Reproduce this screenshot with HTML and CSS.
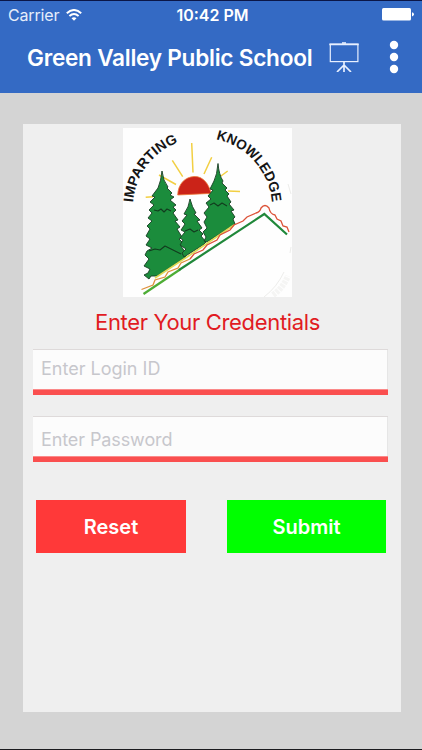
FILE: index.html
```html
<!DOCTYPE html>
<html lang="en">
<head>
	<meta charset="utf-8">
	<title>Green Valley Public School</title>
	<meta name="viewport" content="width=device-width, initial-scale=1.0">
	<link rel="stylesheet" href="styles.css">
</head>
<body>
	<header class="header">
		<div class="status">
			<div class="carrier">
				<span>Carrier</span>
				<svg class="wifi" viewBox="0 0 16 12" width="16" height="12" fill="none" stroke="#fff" stroke-width="2">
					<path d="M0.8 4.2 Q8 -2.2 15.2 4.2"/>
					<path d="M3.4 7 Q8 2.9 12.6 7"/>
					<path d="M8 11.8 L5.5 9.2 Q8 7.2 10.5 9.2 Z" fill="#fff" stroke="none"/>
				</svg>
			</div>
			<span class="clock">10:42 PM</span>
			<svg class="battery" viewBox="0 0 32 13" width="32" height="13" fill="#fff">
				<rect x="0" y="0" width="29" height="12.6" rx="1.5"/>
				<path d="M30 4.2 Q32 4.8 32 6.3 T30 8.4 Z"/>
			</svg>
		</div>
		<div class="nav">
			<h1 class="title">Green Valley Public School</h1>
			<svg class="board" viewBox="0 0 30 30" width="30" height="30" fill="none" stroke="#e8f0ff" stroke-width="1.2">
				<rect x="1.3" y="2.2" width="27.6" height="17.4"/>
				<path d="M0.3 2.4 H29.7" stroke-width="1.7"/>
				<path d="M13 1 H17" stroke-width="1.6"/>
				<path d="M15 20 V30 M15 23 L8 30 M15 23 L22 30" stroke-width="1.7"/>
			</svg>
			<svg class="more" viewBox="0 0 10 34" width="10" height="34" fill="#fff">
				<circle cx="5" cy="5" r="4.2"/>
				<circle cx="5" cy="17" r="4.2"/>
				<circle cx="5" cy="29" r="4.2"/>
			</svg>
		</div>
	</header>
	<main class="page">
		<form class="card">
			<svg class="logo" viewBox="123 128 169 169" width="169" height="169">
				<defs>
					<path id="arcLeft" d="M133 202.5 A70 70 0 0 1 202 138"/>
					<path id="arcRight" d="M216 139.4 A70 70 0 0 1 271 220"/>
				</defs>
				<rect x="123" y="128" width="169" height="169" fill="#fefefe"/>
				<!-- worn corner of the badge -->
				<g fill="none" stroke="#ededeb">
					<path d="M264 297 Q277 287 284 272" stroke-width="1"/>
					<path d="M273 295 Q283 288 288 276" stroke-width="6" stroke="#f5f5f4" stroke-dasharray="3 1"/>
					<path d="M288 184 L291 194 M290 253 L291 247"/>
				</g>
				<!-- sun -->
				<g fill="none" stroke="#f2cf42" stroke-width="1.5">
					<path d="M191.7 143 L193 172.5 M172.3 160.3 L182.7 176.7 M159 175 L176 184.5 M145.7 197.3 L153 196.7"/>
					<path d="M204 174 L211.7 157.3 M221 176 L227.7 171 M228 191 L240 191.4"/>
				</g>
				<path d="M177.7 195 C178 184 185 177 194 176.5 C203 176 209 184 211 193.4 Z" fill="#cb2318" stroke="#ed7a38" stroke-width="0.8"/>
				<!-- trees -->
				<g stroke-linejoin="round">
					<path class="tree" d="M162 171 Q163 181 168 187 L167 188 L172 193 L170 195 L174 197 L170 200 L176 205 L173 207 L176 210 L173 213 L178 220 L175 221 L180 227 L177 229 L182 237 L179 239 L184 244 L181 246 L185 252 L182 254 L186 257 L157 276 L151 276 L149 279 L144 275 L148 273 L150 269 L144 266 L149 259 L145 255 L147 251 L152 248 L146 245 L150 239 L146 236 L150 229 L147 226 L152 221 L148 218 L152 213 L149 210 L154 205 L150 202 L155 197 L152 196 L158 188 Q161 181 162 171 Z"/>
					<path class="tree" d="M190 199 Q192 207 196 213 L194 214 L200 220 L197 221 L202 228 L199 230 L203 234 L201 236 L206 242 L203 245 L184 257 L182 253 L186 249 L180 245 L183 240 L180 238 L185 232 L181 230 L185 224 L182 221 L187 215 L184 214 Q189 207 190 199 Z"/>
					<path class="tree" d="M218 163.5 Q219 175 223 181 L222 183 L227 188 L225 190 L229 194 L227 196 L231 202 L229 204 L234 210 L231 211 L235 217 L233 219 L235 224 L207 242 L204 241 L206 237 L203 232 L207 228 L204 222 L207 217 L204 213 L209 207 L206 203 L211 199 L208 196 L213 190 L210 189 L214 181 Q217 175 218 163.5 Z"/>
					<path class="branch" d="M154 210 L158 211 L161 209 L164 212 L167 209 L171 211 M149 251 L155 249 L160 250 L165 246 L169 248 L173 250 L181 254 M185 231 L190 229 L194 232 L198 230 M210 205 L214 203 L218 206 L222 203 L227 206"/>
				</g>
				<!-- hill -->
				<g fill="none">
					<path d="M155 278 L190 255 L234 225" stroke="#dddb55" stroke-width="1.6"/>
					<path d="M141.5 289.5 L153 285 L155 280 L165 277 L168 272 L178 268 L181 263 L190 259" stroke="#df903b" stroke-width="1.3"/>
					<path d="M190 259 L194 254 L203 250 L207 245 L217 240 L220 235 L230 230 L234 225 L243 221 L247 217 L256 213 Q260 212 261 208 Q265 203 269 208 Q270 214 275 215 L277 219 L281 221 L283 226 L287 227 L289 232" stroke="#dc5238" stroke-width="1.3"/>
					<path d="M143.5 294 L180 269.5" stroke="#4dad35" stroke-width="2.2"/>
					<path d="M179 270 L264.3 214 L287 234.5" stroke="#20883a" stroke-width="2.2"/>
				</g>
				<text class="motto" textLength="79" lengthAdjust="spacingAndGlyphs"><textPath href="#arcLeft">IMPARTING</textPath></text>
				<text class="motto" textLength="90" lengthAdjust="spacingAndGlyphs"><textPath href="#arcRight">KNOWLEDGE</textPath></text>
			</svg>
			<h2 class="prompt">Enter Your Credentials</h2>
			<input class="field login" type="text" placeholder="Enter Login ID">
			<input class="field password" type="password" placeholder="Enter Password">
			<div class="actions">
				<button class="btn reset" type="reset">Reset</button>
				<button class="btn submit" type="button">Submit</button>
			</div>
		</form>
	</main>
</body>
</html>
```
FILE: styles.css
```css
* {
	box-sizing: border-box;
}

html, body {
	margin: 0;
	padding: 0;
}

body {
	display: flex;
	flex-direction: column;
	height: 750px;
	overflow: hidden;
	background: #d4d4d4;
	border-top: 1px solid #0b1647;
	border-bottom: 1px solid #1b1b1f;
	font-family: Inter, "Liberation Sans", sans-serif;
}

.header {
	height: 92px;
	background: #346ac4;
	color: #fff;
}

.status {
	display: grid;
	grid-template-columns: 1fr auto 1fr;
	align-items: center;
	height: 27px;
	padding: 0 8px;
	font-size: 16px;
}

.carrier {
	display: flex;
	align-items: center;
	gap: 7px;
	color: #e6eefb;
	letter-spacing: -0.15px;
}

.clock {
	padding-left: 3px;
	font-weight: 600;
	font-size: 16px;
}

.battery {
	justify-self: end;
}

.nav {
	display: flex;
	align-items: center;
	height: 58px;
	padding-left: 27px;
}

.title {
	width: 302px;
	margin: 0;
	font-size: 22.6px;
	font-weight: 600;
	letter-spacing: -0.25px;
	white-space: nowrap;
}

.more {
	margin-left: 30px;
}

.page {
	flex: 1;
	padding: 31px 21px 37px 23px;
}

.card {
	display: flex;
	flex-direction: column;
	height: 100%;
	padding: 4px 13px 0 10px;
	background: #efefef;
}

.logo {
	display: block;
	margin-left: 90px;
	overflow: visible;
}

.tree {
	fill: #1b8c3c;
	stroke: #173d22;
	stroke-width: 0.9;
}

.branch {
	fill: none;
	stroke: #123b1e;
	stroke-width: 1.1;
}

.motto {
	font: bold 14px "Liberation Sans", sans-serif;
	fill: #151515;
}

.prompt {
	margin: 10px 0 0 62px;
	font-size: 22px;
	font-weight: 400;
	line-height: 30px;
	letter-spacing: -0.33px;
	color: #e11b22;
	white-space: nowrap;
}

.field {
	width: 100%;
	height: 46px;
	border: none;
	border-radius: 0;
	background: #fcfcfc;
	box-shadow: inset 0 -5px #fa4f4f, inset 0 -6px #fb8a8a, inset 0 1px #dedada, inset -1px 0 #e6e6e6;
	font-family: inherit;
	font-size: 18px;
	outline: none;
}

.field::placeholder {
	color: #c7c7cc;
	opacity: 1;
}

.login {
	margin-top: 12px;
	padding: 0 8px 8px;
}

.password {
	margin-top: 21px;
	padding: 1px 8px 0;
	letter-spacing: -0.1px;
}

.actions {
	display: flex;
	justify-content: space-between;
	padding: 0 2px 0 3px;
	margin-top: 38px;
}

.btn {
	height: 53px;
	padding: 0;
	border: none;
	color: #fff;
	font-family: inherit;
	font-size: 20px;
	font-weight: 600;
}

.reset {
	width: 150px;
	background: #ff3939;
}

.submit {
	width: 159px;
	background: #00ff00;
}
```
